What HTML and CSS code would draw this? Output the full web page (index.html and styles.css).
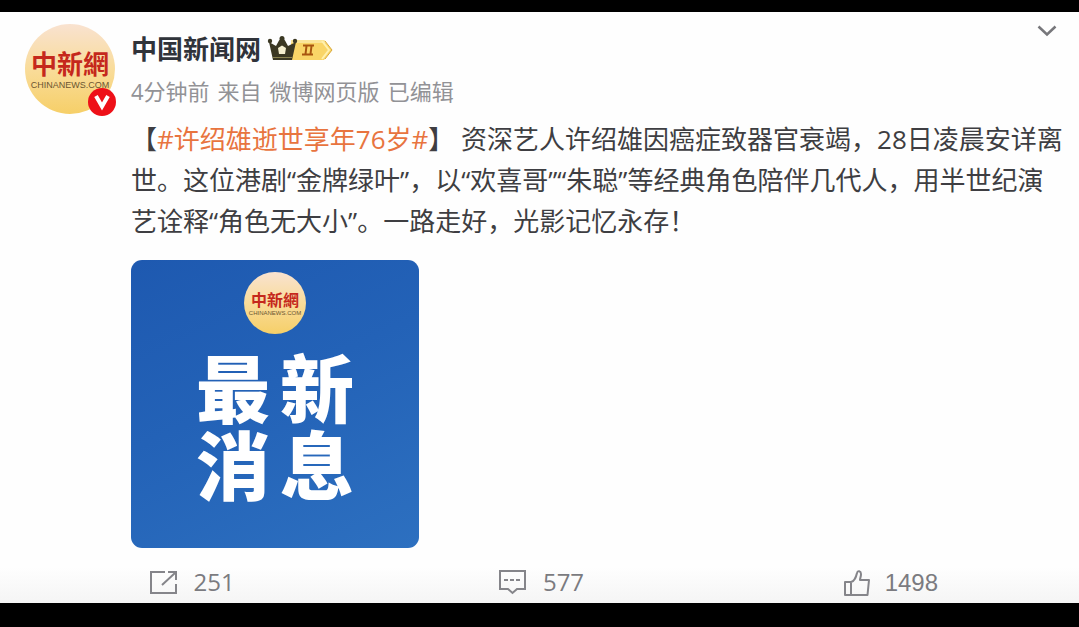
FILE: index.html
```html
<!DOCTYPE html>
<html lang="zh-CN">
<head>
<meta charset="utf-8">
<meta name="viewport" content="width=device-width, initial-scale=1">
<title>中国新闻网</title>
<link rel="stylesheet" href="styles.css">
</head>
<body>
<article class="post">
  <div class="avatar">
    <div class="seal">
      <span class="seal-name" lang="zh-TW">中新網</span>
      <span class="seal-site">CHINANEWS.COM</span>
    </div>
    <svg class="verified" viewBox="0 0 28 28" aria-hidden="true">
      <circle cx="14" cy="14" r="14" fill="#ee1018"/>
      <path d="M8 8L14 18.500L20 8" fill="none" stroke="#fff" stroke-width="4"/>
    </svg>
  </div>
  <div class="content">
    <header class="head">
      <div class="title">
        <h1 class="name">中国新闻网</h1>
        <svg class="rank" viewBox="0 0 66 26" aria-hidden="true">
          <path d="M24 4H57L65 14L57 24H24Z" fill="#f9d567"/>
          <path d="M24 4H57L59 7H24Z" fill="#fbe69a"/>
          <path d="M55 5L62 14L55 23" fill="none" stroke="#fff0ae" stroke-width="2"/>
          <path d="M58 5L65 14L58 23" fill="none" stroke="#d9a83a" stroke-width="1"/>
          <path d="M36 9.500H47M35 18.500H46M39.500 10L38.500 18M44.500 10L43.500 18" fill="none" stroke="#a8550f" stroke-width="2"/>
          <path d="M2 6L9 10L12 4.500L15 1L18 4.500L21 10L29 6L25 24H6Z" fill="#3b3823"/>
          <circle cx="3" cy="5" r="2.200" fill="#3b3823"/>
          <circle cx="15" cy="2.500" r="2.500" fill="#3b3823"/>
          <circle cx="28" cy="5" r="2.200" fill="#3b3823"/>
          <path d="M6 21.500H25" stroke="#8a8350" stroke-width="1"/>
          <path d="M15 9.500L19 12L18 18H12L11 12Z" fill="#f5efcf"/>
        </svg>
        <button class="more" type="button" aria-label="更多">
          <svg viewBox="0 0 20 12" width="20" height="12"><path d="M1.500 1.500L10 9.500L18.500 1.500" fill="none" stroke="#77777b" stroke-width="2.500"/></svg>
        </button>
      </div>
      <p class="meta"><span>4分钟前</span><span>来自</span><span>微博网页版</span><span>已编辑</span></p>
    </header>
    <p class="text">【<a class="topic" href="#">#许绍雄逝世享年76岁#</a>】 资深艺人许绍雄因癌症致器官衰竭，28日凌晨安详离世。这位港剧“金牌绿叶”，以“欢喜哥”“朱聪”等经典角色陪伴几代人，用半世纪演艺诠释“角色无大小”。一路走好，光影记忆永存！</p>
    <div class="picture">
      <div class="seal seal-small">
        <span class="seal-name" lang="zh-TW">中新網</span>
        <span class="seal-site">CHINANEWS.COM</span>
      </div>
      <div class="headline"><span>最</span><span>新</span><span>消</span><span>息</span></div>
    </div>
  </div>
  <footer class="actions">
    <button class="action" type="button">
      <svg viewBox="0 0 30 26" width="30" height="26"><path d="M16 3H2V24H27V15M13 16L26 4M19 3H27V11" fill="none" stroke="#85858a" stroke-width="2"/></svg>
      <span>251</span>
    </button>
    <button class="action" type="button">
      <svg viewBox="0 0 30 26" width="30" height="26"><path d="M2 2H27V20H19L14.500 24L10 20H2Z" fill="none" stroke="#85858a" stroke-width="2"/><path d="M6 11H23" stroke="#85858a" stroke-width="2" stroke-dasharray="4 2"/></svg>
      <span>577</span>
    </button>
    <button class="action like" type="button">
      <svg viewBox="0 0 30 28" width="30" height="28"><path d="M2 13H8V26H2ZM8 13C12 12 13 8 14 4C14.500 1 18 2 18 5C18 8 17 9 17 11H26L24.500 26H8" fill="none" stroke="#85858a" stroke-width="2" stroke-linejoin="round"/></svg>
      <span>1498</span>
    </button>
  </footer>
</article>
</body>
</html>
```
FILE: styles.css
```css
* {
  box-sizing: border-box;
}

body {
  margin: 0;
  min-height: 100vh;
  padding: 12px 0 24px;
  display: flex;
  background: #000;
  color: #3e3e42;
  font-family: "Open Sans", "Noto Sans CJK SC", sans-serif;
}

h1,
p {
  margin: 0;
}

button {
  padding: 0;
  border: 0;
  background: none;
  font: inherit;
  color: inherit;
}

svg {
  display: block;
  flex: none;
}

.post {
  flex: 1;
  display: grid;
  grid-template-columns: 90px 1fr;
  grid-template-rows: auto 1fr;
  column-gap: 16px;
  padding: 12px 14px 0 25px;
  background: linear-gradient(#fefefe 94%, #f5f5f5);
}

.avatar {
  position: relative;
  height: 90px;
}

.verified {
  position: absolute;
  right: -1px;
  bottom: -2px;
  width: 28px;
  height: 28px;
}

.seal {
  width: 90px;
  height: 90px;
  border-radius: 50%;
  display: flex;
  flex-direction: column;
  align-items: center;
  justify-content: center;
  background: linear-gradient(#f9e2d0, #f9dc9a 50%, #f6cf68);
}

.seal-name {
  font: 700 26px/32px "Noto Sans CJK TC", sans-serif;
  color: #c5281c;
}

.seal-site {
  font: 9px/12px "Liberation Sans", sans-serif;
  color: #6b5531;
}

.title {
  display: flex;
  align-items: center;
  height: 50px;
}

.name {
  font-size: 26px;
  font-weight: 700;
  line-height: 36px;
  color: #30333a;
}

.rank {
  width: 66px;
  height: 26px;
  margin-left: 6px;
}

.more {
  margin: 0 8px 36px auto;
}

.meta {
  display: flex;
  gap: 8px;
  font-size: 22px;
  line-height: 34px;
  color: #929296;
}

.text {
  margin-top: 11px;
  font-size: 26px;
  line-height: 41px;
}

.topic {
  color: #e8743f;
  text-decoration: none;
}

.picture {
  width: 288px;
  margin-top: 18px;
  padding: 12px 0 44px;
  border-radius: 11px;
  display: flex;
  flex-direction: column;
  align-items: center;
  background: linear-gradient(155deg, #1e59b0, #2362b7 45%, #2d70c0);
}

.seal-small {
  width: 62px;
  height: 62px;
}

.seal-small .seal-name {
  font-size: 16px;
  line-height: 20px;
}

.seal-small .seal-site {
  font-size: 6px;
  line-height: 8px;
}

.headline {
  display: grid;
  grid-template-columns: auto auto;
  column-gap: 10px;
  margin-top: 16px;
  font-size: 74px;
  font-weight: 900;
  line-height: 77px;
  color: #fff;
}

.actions {
  grid-column: 1 / -1;
  display: grid;
  grid-template-columns: repeat(3, 1fr);
  align-items: center;
  margin-left: -8px;
  padding-top: 12px;
}

.action {
  display: flex;
  align-items: center;
  justify-content: center;
  gap: 15px;
  font-size: 24px;
  line-height: 32px;
  color: #7b7b80;
}

.like {
  gap: 12px;
  padding-top: 3px;
  font-family: "Liberation Sans", sans-serif;
}
```
